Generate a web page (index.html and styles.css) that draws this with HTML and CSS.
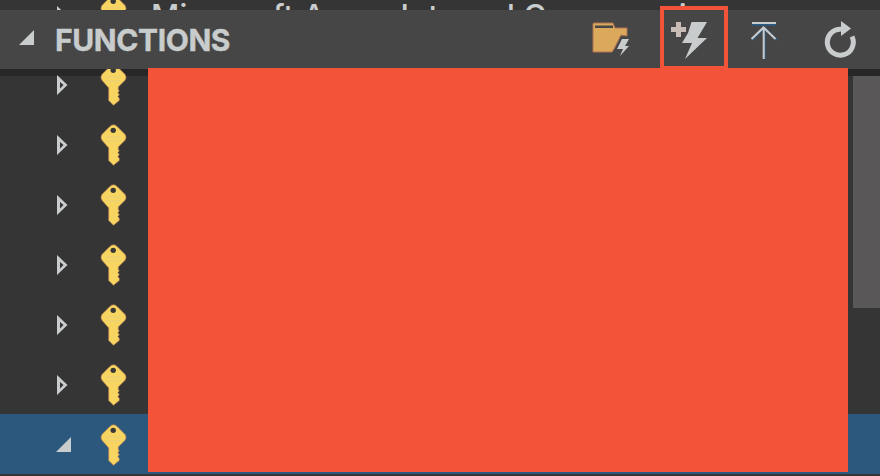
FILE: index.html
```html
<!DOCTYPE html>
<html lang="en">
<head>
<meta charset="utf-8">
<title>Functions</title>
<link rel="stylesheet" href="styles.css">
</head>
<body>
<svg class="defs" aria-hidden="true">
  <symbol id="key" viewBox="0 0 28 44">
    <path d="M14 1 Q16 1 18 3L26 11Q28 14 26 17L19 24V27L20 28L18.5 30L20 32L18.5 34L20 36V38L14 43L9 38V25L2 17Q0 14 2 11L10 3Q12 1 14 1Z" fill="#f7d560" stroke="#b47a53" stroke-width=".7"/>
    <circle cx="13.7" cy="6.8" r="2.8" fill="#383838"/>
    <path d="M6 13.5H22M6 17.5H22" stroke="#dccb91" stroke-width="1" stroke-dasharray="1 1"/>
  </symbol>
  <symbol id="closed" viewBox="0 0 12 22">
    <path fill-rule="evenodd" d="M1 1L11.5 11L1 21ZM4 8V14.5L7.5 11Z" fill="#c9cccc"/>
  </symbol>
  <symbol id="open" viewBox="0 0 16 16"><path d="M16 0V16H0Z" fill="#c9cccc"/></symbol>
</svg>
<div class="panel">
  <div class="shadow"></div>
  <div class="tree">
    <div class="row leaving"><svg class="arrow"><use href="#closed"/></svg><svg class="key"><use href="#key"/></svg><span class="label">Microsoft Azure Internal Consumption</span></div>
    <div class="row"><svg class="arrow"><use href="#closed"/></svg><svg class="key"><use href="#key"/></svg></div>
    <div class="row"><svg class="arrow"><use href="#closed"/></svg><svg class="key"><use href="#key"/></svg></div>
    <div class="row"><svg class="arrow"><use href="#closed"/></svg><svg class="key"><use href="#key"/></svg></div>
    <div class="row"><svg class="arrow"><use href="#closed"/></svg><svg class="key"><use href="#key"/></svg></div>
    <div class="row"><svg class="arrow"><use href="#closed"/></svg><svg class="key"><use href="#key"/></svg></div>
    <div class="row"><svg class="arrow"><use href="#closed"/></svg><svg class="key"><use href="#key"/></svg></div>
    <div class="row selected"><svg class="arrow-open"><use href="#open"/></svg><svg class="key"><use href="#key"/></svg></div>
  </div>
  <header class="header">
    <svg class="header-arrow"><use href="#open"/></svg>
    <h1>FUNCTIONS</h1>
    <div class="actions">
      <svg class="folder" width="40" height="36" viewBox="0 0 40 36">
        <path d="M1 2Q1 1 2 1H21L23 6H35V14L29 13L22 27L20 30H1Z" fill="#dba95c" stroke="#b17453"/>
        <path d="M3 3.5H21V6H3Z" fill="#474647"/>
        <path d="M30 17H37L33 24H37L28 34L31 27H25Z" fill="#c9cccc"/>
      </svg>
      <svg class="bolt" width="38" height="40" viewBox="0 0 38 40">
        <path d="M6 2H11V7H16V12H11V17H6V12H1V7H6Z" fill="#c9bcb6"/>
        <path d="M21.5 2H37L27.5 18H37L15 39L22 23H12L18 13Z" fill="#c9cccc"/>
      </svg>
      <svg class="deploy" width="28" height="40" viewBox="0 0 28 40">
        <path d="M2 4.8H26M14.7 8V39M2 20L14.5 8L27 20" fill="none" stroke="#2d5a82" stroke-width="2"/>
        <path d="M2 3H26M13.7 8V39M1.5 19L13.5 7.5L25.5 19" fill="none" stroke="#c9cccc" stroke-width="2"/>
      </svg>
      <svg class="refresh" width="34" height="40" viewBox="0 0 34 40">
        <path d="M18 9.2A13 13 0 1 0 29 16.5" fill="none" stroke="#c9cccc" stroke-width="5"/>
        <path d="M18 1L28 8.5L18 16Z" fill="#c9cccc"/>
      </svg>
    </div>
  </header>
  <div class="scrollbar"></div>
  <div class="redaction"></div>
  <div class="highlight"></div>
</div>
</body>
</html>
```
FILE: styles.css
```css
* { box-sizing: border-box; }
body { margin: 0; background: #353535; color: #c9cccc; font-family: Inter, "Liberation Sans", sans-serif; }
.defs { position: absolute; width: 0; height: 0; }
.panel { position: relative; width: 880px; height: 476px; overflow: hidden; }
.shadow { position: absolute; top: 69px; left: 0; width: 880px; height: 7px; background: #272727; }
.tree { position: relative; margin-top: -6px; }
.row { display: flex; align-items: center; height: 60px; padding: 2px 0 0 56px; white-space: nowrap; }
.leaving { margin-top: -15px; margin-bottom: 9px; }
.arrow { width: 12px; height: 22px; margin-right: 32px; }
.arrow-open { width: 15px; height: 15px; margin: 0 29px 2px 0; }
.key { width: 27px; height: 44px; }
.label { margin-left: 24px; font-size: 31px; line-height: 58px; letter-spacing: .3px; font-weight: 500; }
.selected { background: #2d587e; }
.header { position: absolute; top: 10px; left: 0; display: flex; align-items: center; width: 880px; height: 59px; padding: 0 23px 0 19px; background: #474647; }
.header-arrow { width: 15px; height: 15px; margin: 0 21px 4px 0; }
h1 { margin: 0; font-size: 30px; line-height: 36px; font-weight: 700; letter-spacing: -.4px; -webkit-text-stroke: .4px #c9cccc; }
.actions { display: flex; align-items: center; margin: 1px 0 0 auto; }
.bolt { margin-left: 38px; }
.deploy { margin-left: 42px; }
.refresh { margin-left: 45px; }
.scrollbar { position: absolute; top: 76px; right: 0; width: 27px; height: 232px; background: #595757; }
.redaction { position: absolute; top: 68px; left: 148px; width: 700px; height: 404px; background: #f35339; }
.highlight { position: absolute; top: 6px; left: 660px; width: 68px; height: 64px; border: 4px solid #f35339; }
```
